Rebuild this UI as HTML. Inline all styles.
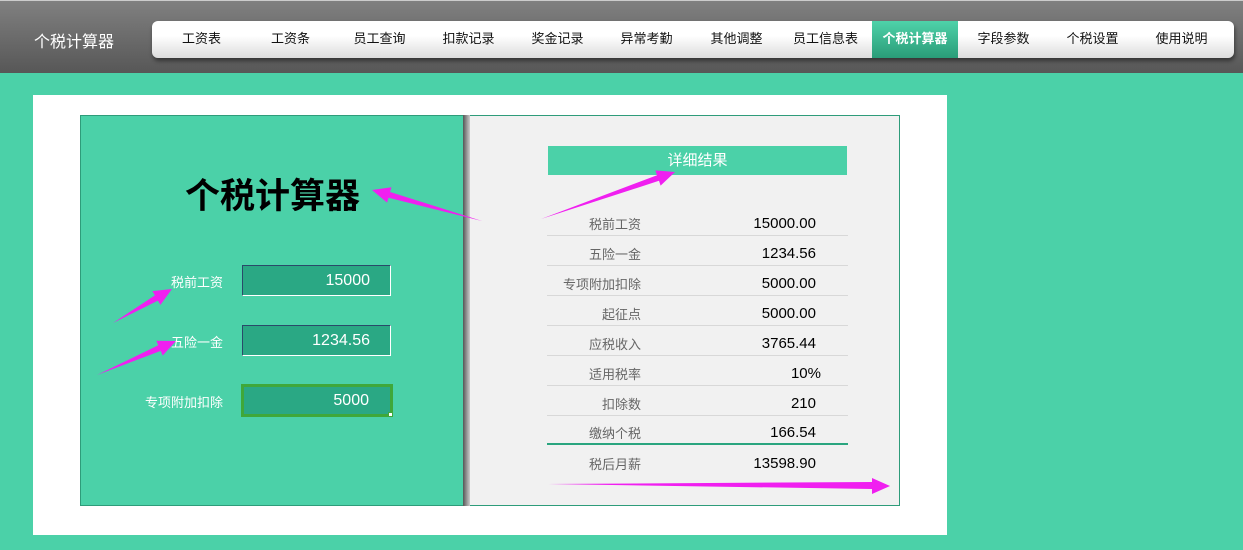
<!DOCTYPE html>
<html><head><meta charset="utf-8"><style>
*{margin:0;padding:0;box-sizing:border-box}
body{width:1243px;height:550px;background:#4bd1a8;position:relative;overflow:hidden;font-family:"Liberation Sans","Noto Sans CJK SC",sans-serif}
.hd{position:absolute;left:0;top:0;width:1243px;height:73px;background:linear-gradient(#808080,#575757);border-top:1px solid #ccc}
.logo{position:absolute;left:34px;top:27px;color:#fff;font-size:16px}
.nav{position:absolute;left:152px;top:20px;width:1082px;height:37px;border-radius:6px;background:linear-gradient(#fff 40%,#dcdcdc);box-shadow:1px 3px 4px rgba(0,0,0,.45);overflow:hidden}
.nav span{position:absolute;top:0;height:37px;line-height:36px;width:89px;text-align:center;font-size:13px;color:#111}
.nav span.on{background:linear-gradient(#4fd2a9,#2a9c78);color:#fff;font-weight:bold}
.wp{position:absolute;left:33px;top:95px;width:914px;height:440px;background:#fff}
.lp{position:absolute;left:80px;top:115px;width:384px;height:391px;background:#4bd1a8;border:1px solid #2e9c7a;border-right:none}
.sh{position:absolute;left:463px;top:115px;width:8px;height:391px;background:linear-gradient(90deg,#555,#999 50%,#ddd)}
.rp{position:absolute;left:470px;top:115px;width:430px;height:391px;background:#f1f1f1;border:1px solid #2e9c7a;border-left:none}
.t{position:absolute;left:185px;top:168px;font-size:35px;font-weight:bold;color:#000}
.lb{position:absolute;color:#fff;font-size:13px;text-align:right;width:150px}
.in{position:absolute;left:242px;width:149px;height:31px;background:#2aa884;border:1px solid #fff;border-left:1px solid #2a4a6a;border-top:1px solid #2a4a6a;color:#fff;font-size:16px;text-align:right;padding-right:20px;line-height:29px}
.in.g{border:3px solid #3fa83a;left:241px;width:152px;height:33px;line-height:27px;padding-right:21px}
.rh{position:absolute;left:548px;top:146px;width:299px;height:29px;background:#4bd1a8;color:#fff;font-size:15px;text-align:center;line-height:29px}
.row{position:absolute;left:547px;width:301px;height:30px;border-bottom:1px solid #d8d8d8}
.row .k{position:absolute;right:207px;top:8px;font-size:13px;color:#666}
.row .v{position:absolute;right:32px;top:9px;font-size:15px;color:#000}
</style></head><body>
<div class="hd"><div class="logo">个税计算器</div>
<div class="nav">
<span style="left:5px">工资表</span><span style="left:94px">工资条</span><span style="left:183px">员工查询</span><span style="left:272px">扣款记录</span><span style="left:361px">奖金记录</span><span style="left:450px">异常考勤</span><span style="left:540px">其他调整</span><span style="left:629px">员工信息表</span><span class="on" style="left:720px;width:86px">个税计算器</span><span style="left:807px">字段参数</span><span style="left:896px">个税设置</span><span style="left:985px">使用说明</span>
</div></div>
<div class="wp"></div>
<div class="lp"></div><div class="sh"></div><div class="rp"></div>
<div class="t">个税计算器</div>
<div class="lb" style="left:73px;top:272px">税前工资</div>
<div class="lb" style="left:73px;top:332px">五险一金</div>
<div class="lb" style="left:73px;top:392px">专项附加扣除</div>
<div class="in" style="top:265px">15000</div>
<div class="in" style="top:325px">1234.56</div>
<div class="in g" style="top:384px">5000</div>
<div style="position:absolute;left:388px;top:412px;width:5px;height:5px;background:#fff;border:1px solid #3fa83a"></div>
<div class="rh">详细结果</div>
<div class="row" style="top:206px"><span class="k">税前工资</span><span class="v">15000.00</span></div>
<div class="row" style="top:236px"><span class="k">五险一金</span><span class="v">1234.56</span></div>
<div class="row" style="top:266px"><span class="k">专项附加扣除</span><span class="v">5000.00</span></div>
<div class="row" style="top:296px"><span class="k">起征点</span><span class="v">5000.00</span></div>
<div class="row" style="top:326px"><span class="k">应税收入</span><span class="v">3765.44</span></div>
<div class="row" style="top:356px"><span class="k">适用税率</span><span class="v" style="right:27px">10%</span></div>
<div class="row" style="top:386px"><span class="k">扣除数</span><span class="v">210</span></div>
<div class="row" style="top:415px;border-bottom:2px solid #2aa57f"><span class="k">缴纳个税</span><span class="v">166.54</span></div>
<div class="row" style="top:446px;border:none"><span class="k">税后月薪</span><span class="v">13598.90</span></div>
<svg width="1243" height="550" style="position:absolute;left:0;top:0">
<g fill="#f01ff0">
<polygon points="482,221 390.1,192 391.5,187.2 372,190 387.1,202.6 388.5,197.8"/>
<polygon points="541,219 659,180.8 660.6,185.6 675,172 655.4,170.4 657,175.2"/>
<polygon points="113,323 157.9,300.6 160.4,304.9 172,289 152.4,291.1 154.9,295.4"/>
<polygon points="97,375 160.7,350.9 162.7,355.5 176,341 156.3,340.7 158.3,345.3"/>
<polygon points="548,484 872,489 872,494 890,486 872,478 872,482"/>
</g></svg>
</body></html>
